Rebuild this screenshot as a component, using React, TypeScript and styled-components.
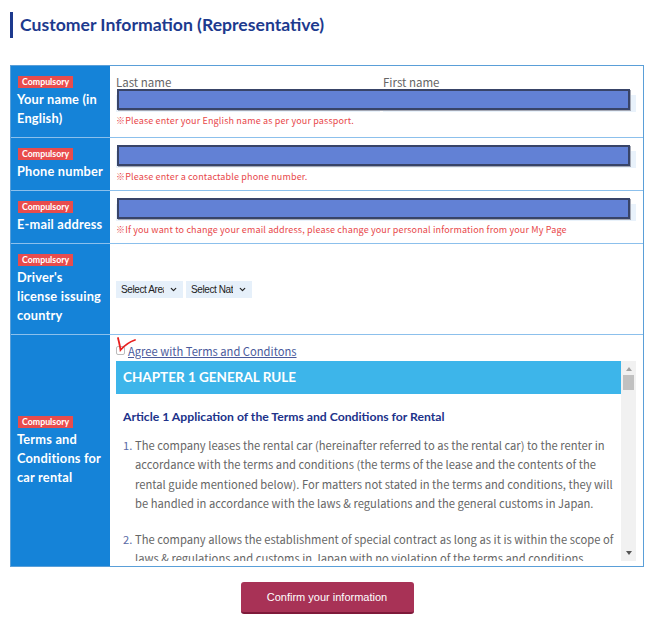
import React from "react";
import styled, { createGlobalStyle } from "styled-components";
import { ChevronDown } from "lucide-react";

const GlobalStyle = createGlobalStyle`
  body {
    margin: 0;
    background: #fff;
    font-family: "Noto Sans CJK JP", "Noto Sans", sans-serif;
  }
`;

const Page = styled.div`
  padding: 12px 11px 0 10px;
`;

const Title = styled.h2`
  margin: 0 0 27px 0;
  height: 26px;
  line-height: 26px;
  border-left: 3px solid #1d3a8e;
  padding-left: 7px;
  font-family: Lato, "Noto Sans", sans-serif;
  font-size: 17.6px;
  font-weight: 700;
  color: #1d3a8e;
`;

const Table = styled.div`
  border: 1px solid #5a9fd8;
`;

const Row = styled.div`
  display: grid;
  grid-template-columns: 99px 1fr;
  border-bottom: 1px solid #8cc0ec;
  &:last-child {
    border-bottom: none;
  }
`;

const LabelCell = styled.div`
  background: #1583d8;
  color: #fff;
  padding: 10px 6px 9px;
  display: flex;
  flex-direction: column;
  justify-content: center;
  align-items: flex-start;
  font-family: Lato, "Noto Sans", sans-serif;
`;

const Badge = styled.span`
  display: inline-block;
  background: #e84c4c;
  color: #fff;
  font-size: 8.8px;
  font-weight: 700;
  height: 12px;
  line-height: 12px;
  padding: 0 4px;
  margin: 0 0 2px 1px;
`;

const LabelText = styled.div`
  font-size: 12.8px;
  font-weight: 700;
  line-height: 19px;
  letter-spacing: 0.2px;
`;

const ValueCell = styled.div<{ $pad?: string }>`
  padding: ${(p) => p.$pad || "6px 7px 6px 6px"};
  display: flex;
  flex-direction: column;
  justify-content: center;
  min-width: 0;
`;

const NameGrid = styled.div`
  position: relative;
  display: grid;
  grid-template-columns: 264px 1fr;
  column-gap: 3px;
`;

const SubLabel = styled.div`
  font-size: 11.5px;
  line-height: 13px;
  color: #666;
`;

const LightInput = styled.div<{ $pos?: boolean }>`
  position: ${(p) => (p.$pos ? "relative" : "static")};
  margin-top: 6px;
  height: 17px;
  background: #e9f2fb;
`;

const Redact = styled.div<{ $top?: number }>`
  position: absolute;
  left: 1px;
  right: 6px;
  top: ${(p) => (p.$top !== undefined ? `${p.$top}px` : "-6px")};
  height: 21px;
  box-sizing: border-box;
  background: #6281d5;
  border: 2px solid #384468;
  box-shadow: 1px 1px 0 #a4a8b4;
`;

const ErrorText = styled.div`
  margin-top: 3px;
  font-size: 9px;
  line-height: 12px;
  letter-spacing: 0.15px;
  color: #e8474a;
`;

const SelectRow = styled.div`
  display: flex;
  gap: 3px;
`;

const SelectBox = styled.div<{ $w: number }>`
  width: ${(p) => p.$w}px;
  height: 17px;
  background: #e6f0fa;
  display: flex;
  align-items: center;
  gap: 5px;
  padding: 0 5px;
  box-sizing: border-box;
  font-family: "Liberation Sans", Arial, sans-serif;
  font-size: 10px;
  color: #222;
  letter-spacing: -0.4px;
`;

const SelectText = styled.span`
  flex: 1;
  overflow: hidden;
  white-space: nowrap;
`;

const AgreeLine = styled.div`
  position: relative;
  display: flex;
  align-items: center;
  gap: 3px;
  height: 15px;
  font-size: 11.2px;
`;

const Checkbox = styled.span`
  width: 7px;
  height: 7px;
  border: 1px solid #bbb;
  border-radius: 2px;
`;

const AgreeLink = styled.a`
  color: #4a5a9c;
  text-decoration: underline;
  cursor: pointer;
`;

const CheckMark = styled.svg`
  position: absolute;
  left: 0;
  top: -9px;
`;

const TermsBox = styled.div`
  margin-top: 3px;
  height: 200px;
  display: flex;
  overflow: hidden;
`;

const TermsContent = styled.div`
  flex: 1;
  overflow: hidden;
`;

const ChapterHead = styled.div`
  background: #3db5ea;
  height: 33px;
  line-height: 33px;
  padding-left: 7px;
  color: #fff;
  font-family: Lato, "Noto Sans", sans-serif;
  font-size: 13.5px;
  font-weight: 700;
`;

const Article = styled.div`
  padding: 0 4px 0 7px;
`;

const ArticleTitle = styled.div`
  margin-top: 16px;
  font-family: Lato, "Noto Sans", sans-serif;
  font-size: 12.2px;
  line-height: 14px;
  font-weight: 700;
  color: #20328a;
`;

const List = styled.div`
  margin-top: 12px;
  display: flex;
  flex-direction: column;
  gap: 16px;
`;

const Item = styled.div`
  display: flex;
  font-size: 11.2px;
  line-height: 19.4px;
  letter-spacing: 0.02px;
  color: #666;
`;

const Num = styled.span`
  flex: 0 0 12px;
  color: #5a6aa6;
`;

const Scrollbar = styled.div`
  width: 15px;
  background: #f1f1f1;
  display: flex;
  flex-direction: column;
  align-items: center;
`;

const Arrow = styled.div<{ $down?: boolean }>`
  margin: ${(p) => (p.$down ? "auto 0 6px" : "6px 0 0")};
  width: 0;
  height: 0;
  border-left: 3.5px solid transparent;
  border-right: 3.5px solid transparent;
  ${(p) =>
    p.$down
      ? "border-top: 4px solid #555;"
      : "border-bottom: 4px solid #a3a3a3;"}
`;

const Thumb = styled.div`
  margin-top: 4px;
  width: 11px;
  height: 15px;
  background: #c1c1c1;
`;

const Footer = styled.div`
  display: flex;
  justify-content: center;
  padding: 15px 0;
`;

const ConfirmButton = styled.button`
  width: 173px;
  height: 32px;
  background: #a83256;
  border: none;
  border-bottom: 2px solid #7e1a3a;
  border-radius: 3px;
  color: #fff;
  font-family: "Liberation Sans", Arial, sans-serif;
  font-size: 11px;
  cursor: pointer;
`;

const Label = ({ lines }: { lines: string[] }) => (
  <LabelCell>
    <Badge>Compulsory</Badge>
    {lines.map((l, i) => (
      <LabelText key={i}>{l}</LabelText>
    ))}
  </LabelCell>
);

const Select = ({ text, width }: { text: string; width: number }) => (
  <SelectBox $w={width}>
    <SelectText>{text}</SelectText>
    <ChevronDown size={9} strokeWidth={3.2} color="#222" />
  </SelectBox>
);

const App = () => {
  return (
    <Page>
      <GlobalStyle />
      <Title>Customer Information (Representative)</Title>
      <Table>
        <Row>
          <Label lines={["Your name (in", "English)"]} />
          <ValueCell>
            <NameGrid>
              <div>
                <SubLabel>Last name</SubLabel>
                <LightInput />
              </div>
              <div>
                <SubLabel>First name</SubLabel>
                <LightInput />
              </div>
              <Redact $top={13} />
            </NameGrid>
            <ErrorText>※Please enter your English name as per your passport.</ErrorText>
          </ValueCell>
        </Row>
        <Row>
          <Label lines={["Phone number"]} />
          <ValueCell>
            <LightInput $pos>
              <Redact />
            </LightInput>
            <ErrorText>※Please enter a contactable phone number.</ErrorText>
          </ValueCell>
        </Row>
        <Row>
          <Label lines={["E-mail address"]} />
          <ValueCell>
            <LightInput $pos>
              <Redact />
            </LightInput>
            <ErrorText>
              ※If you want to change your email address, please change your personal information from your My Page
            </ErrorText>
          </ValueCell>
        </Row>
        <Row>
          <Label lines={["Driver's", "license issuing", "country"]} />
          <ValueCell>
            <SelectRow>
              <Select text="Select Area" width={67} />
              <Select text="Select Nationality" width={66} />
            </SelectRow>
          </ValueCell>
        </Row>
        <Row>
          <Label lines={["Terms and", "Conditions for", "car rental"]} />
          <ValueCell $pad="8px 7px 5px 6px">
            <AgreeLine>
              <Checkbox />
              <AgreeLink>Agree with Terms and Conditons</AgreeLink>
              <CheckMark width="22" height="18" viewBox="0 0 22 18">
                <path
                  d="M2 4 C3 8 4 12 4.5 16 C8 12 13 8 19 6"
                  fill="none"
                  stroke="#e8201f"
                  strokeWidth="1.8"
                  strokeLinecap="round"
                />
              </CheckMark>
            </AgreeLine>
            <TermsBox>
              <TermsContent>
                <ChapterHead>CHAPTER 1 GENERAL RULE</ChapterHead>
                <Article>
                  <ArticleTitle>Article 1 Application of the Terms and Conditions for Rental</ArticleTitle>
                  <List>
                    <Item>
                      <Num>1.</Num>
                      <span>
                        The company leases the rental car (hereinafter referred to as the rental car) to the renter in
                        accordance with the terms and conditions (the terms of the lease and the contents of the
                        rental guide mentioned below). For matters not stated in the terms and conditions, they will
                        be handled in accordance with the laws &amp; regulations and the general customs in Japan.
                      </span>
                    </Item>
                    <Item>
                      <Num>2.</Num>
                      <span>
                        The company allows the establishment of special contract as long as it is within the scope of
                        laws &amp; regulations and customs in Japan with no violation of the terms and conditions.
                      </span>
                    </Item>
                  </List>
                </Article>
              </TermsContent>
              <Scrollbar>
                <Arrow />
                <Thumb />
                <Arrow $down />
              </Scrollbar>
            </TermsBox>
          </ValueCell>
        </Row>
      </Table>
      <Footer>
        <ConfirmButton>Confirm your information</ConfirmButton>
      </Footer>
    </Page>
  );
};

export default App;
